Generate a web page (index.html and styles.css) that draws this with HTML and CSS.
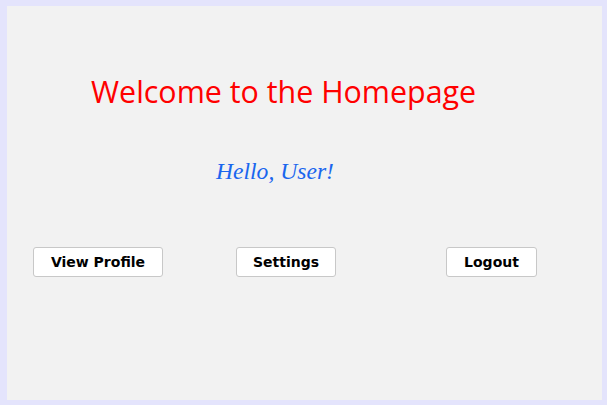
FILE: index.html
```html
<!DOCTYPE html>
<html>
<head>
<meta charset="utf-8">
<link rel="stylesheet" href="styles.css">
</head>
<body>
<div class="frame">
  <div class="panel">
    <h1 class="title">Welcome to the Homepage</h1>
    <p class="greeting">Hello, User!</p>
    <div class="actions">
      <button class="btn btn-profile">View Profile</button>
      <button class="btn btn-settings">Settings</button>
      <button class="btn btn-logout">Logout</button>
    </div>
  </div>
</div>
</body>
</html>
```
FILE: styles.css
```css
html, body {
  margin: 0;
  padding: 0;
  width: 607px;
  height: 405px;
  overflow: hidden;
  background: #e4e4fc;
}
.frame {
  box-sizing: border-box;
  width: 607px;
  height: 405px;
  padding: 6px 5px 5px 7px;
}
.panel {
  box-sizing: border-box;
  height: 394px;
  background: #f2f2f2;
  padding-top: 66px;
}
.title {
  margin: 0;
  padding-left: 84px;
  font-family: "Open Sans", sans-serif;
  font-weight: 400;
  font-size: 30.4px;
  line-height: 40px;
  color: #ff0000;
}
.greeting {
  margin: 45px 0 0 0;
  padding-left: 209px;
  font-family: "Liberation Serif", serif;
  font-style: italic;
  font-size: 23.6px;
  line-height: 28px;
  color: #1a66ee;
}
.actions {
  display: flex;
  margin-top: 62px;
  padding-left: 26px;
}
.btn {
  box-sizing: border-box;
  height: 30px;
  background: #ffffff;
  border: 1px solid #c8c8c8;
  border-radius: 3px;
  font-family: "DejaVu Sans", sans-serif;
  font-weight: bold;
  font-size: 14px;
  color: #000;
  padding: 0;
}
.btn-profile { width: 130px; }
.btn-settings { width: 100px; margin-left: 73px; }
.btn-logout { width: 91px; margin-left: 110px; }
```
